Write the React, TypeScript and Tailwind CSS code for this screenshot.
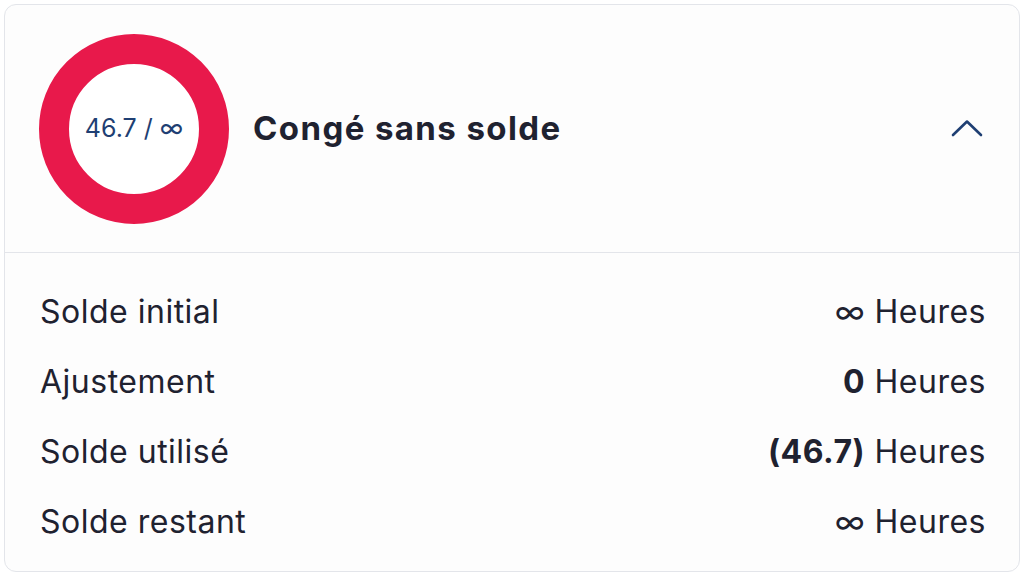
const rows: { label: string; amount: string; bold: boolean }[] = [
  { label: "Solde initial", amount: "∞", bold: false },
  { label: "Ajustement", amount: "0", bold: true },
  { label: "Solde utilisé", amount: "(46.7)", bold: true },
  { label: "Solde restant", amount: "∞", bold: false },
];

function BalanceRing() {
  return (
    <div className="flex h-[190px] w-[190px] shrink-0 items-center justify-center rounded-full border-[30px] border-[#e8194b] bg-white">
      <span className="text-[25px] text-[#1f3f73]">46.7 / ∞</span>
    </div>
  );
}

export default function App() {
  return (
    <div className="min-h-[574px] bg-white p-1 font-['Inter','Liberation_Sans',sans-serif] text-[#1f2230]">
      <div className="h-[568px] rounded-xl border border-[#e3e5ea] bg-[#fdfdfd]">
        <div className="flex h-[248px] items-center border-b border-[#e3e5ea] pl-[34px] pr-[36px]">
          <BalanceRing />
          <h2 className="ml-6 flex-1 text-[33px] font-bold tracking-[1.4px]">Congé sans solde</h2>
          <button type="button" className="text-[#1f3f73]">
            <svg width="32" height="20" viewBox="0 0 32 20" fill="none">
              <path d="M2 16 L16 2.5 L30 16" stroke="currentColor" strokeWidth="2.6" strokeLinecap="round" strokeLinejoin="round" />
            </svg>
          </button>
        </div>
        <div className="pl-[35px] pr-[33px] pt-[24px]">
          {rows.map((row) => (
            <div key={row.label} className="flex h-[70px] items-center justify-between text-[32px] tracking-[0.5px]">
              <span>{row.label}</span>
              <span>
                <span className={row.bold ? "font-bold" : ""}>{row.amount}</span> Heures
              </span>
            </div>
          ))}
        </div>
      </div>
    </div>
  );
}
